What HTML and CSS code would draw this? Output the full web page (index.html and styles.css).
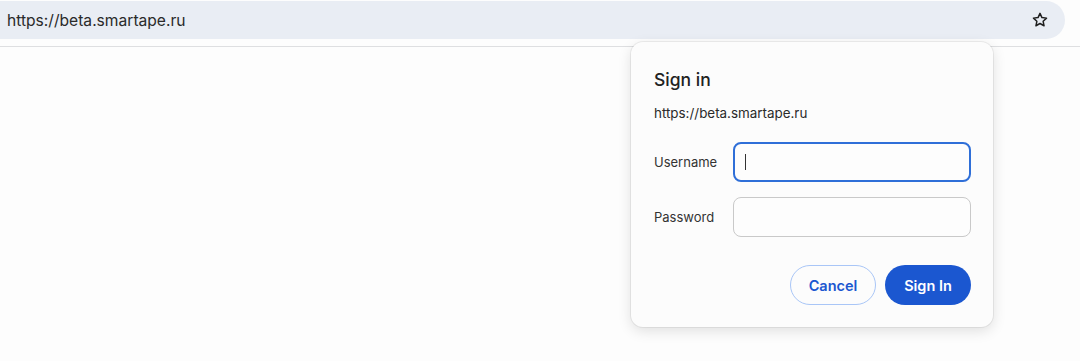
FILE: index.html
```html
<!DOCTYPE html>
<html lang="en">
<head>
  <meta charset="UTF-8" />
  <title>Sign in</title>
  <link rel="stylesheet" href="styles.css">
</head>
<body>
  <div class="toolbar">
    <div class="omnibox">
      <span class="omnibox-url">https://beta.smartape.ru</span>
      <svg class="star" width="18" height="18" viewBox="0 0 24 24">
        <path d="M12 3.2l2.6 5.6 6.1.7-4.5 4.2 1.2 6-5.4-3-5.4 3 1.2-6-4.5-4.2 6.1-.7z" fill="none" stroke="#1f1f1f" stroke-width="2" stroke-linejoin="round"/>
      </svg>
    </div>
  </div>

  <div class="page"></div>

  <!-- Boîte de connexion -->
  <div class="dialog">
    <div class="dialog-title">Sign in</div>
    <div class="dialog-origin">https://beta.smartape.ru</div>
    <div class="field">
      <label class="field-label">Username</label>
      <div class="field-input focused"><span class="caret"></span></div>
    </div>
    <div class="field">
      <label class="field-label">Password</label>
      <div class="field-input"></div>
    </div>
    <div class="actions">
      <button class="btn btn-cancel">Cancel</button>
      <button class="btn btn-primary">Sign In</button>
    </div>
  </div>
</body>
</html>
```

FILE: styles.css
```css
body {
  margin: 0;
  background: #fdfdfd;
  font-family: Inter, "Liberation Sans", sans-serif;
  color: #1f1f1f;
  height: 361px;
  overflow: hidden;
}

.toolbar {
  height: 47px;
  box-sizing: border-box;
  padding-top: 1px;
  border-bottom: 1px solid #dedfe1;
  background: #fdfdfd;
}

.omnibox {
  height: 38px;
  margin-left: -30px;
  width: 1095px;
  box-sizing: border-box;
  padding: 0 16px 0 37px;
  background: #e9edf4;
  border-radius: 19px;
  display: flex;
  align-items: center;
  justify-content: space-between;
}

.omnibox-url {
  font-size: 15.6px;
  color: #2a2a2a;
}

.star {
  display: block;
}

/* Boîte flottante */
.dialog {
  position: absolute;
  top: 42px;
  left: 631px;
  width: 362px;
  height: 285px;
  box-sizing: border-box;
  padding: 26px 22px 0 23px;
  background: #fcfcfc;
  border-radius: 12px;
  box-shadow: 0 0 0 1px rgba(0, 0, 0, 0.06), 0 4px 14px rgba(0, 0, 0, 0.12);
}

.dialog-title {
  font-size: 17.5px;
  font-weight: 500;
  color: #222;
  line-height: 24px;
}

.dialog-origin {
  margin-top: 13px;
  font-size: 13.4px;
  color: #2a2a2a;
  line-height: 16px;
}

.field {
  display: flex;
  align-items: center;
  margin-top: 15px;
}

.dialog-origin + .field {
  margin-top: 21px;
}

.field-label {
  width: 79px;
  font-size: 13px;
  color: #333;
}

.field-input {
  width: 239px;
  height: 40px;
  box-sizing: border-box;
  border: 1px solid #c9c9c9;
  border-radius: 8px;
  background: #fdfdfd;
  display: flex;
  align-items: center;
  padding-left: 11px;
}

.field-input.focused {
  border: 2px solid #2f6fd8;
  padding-left: 10px;
}

.caret {
  width: 1px;
  height: 16px;
  background: #333;
}

.actions {
  display: flex;
  justify-content: flex-end;
  gap: 9px;
  margin-top: 28px;
}

.btn {
  height: 40px;
  border-radius: 20px;
  font-family: Inter, "Liberation Sans", sans-serif;
  font-size: 14.5px;
  font-weight: 600;
  cursor: pointer;
}

.btn-cancel {
  width: 86px;
  background: #fcfcfc;
  border: 1px solid #a9c6f7;
  color: #1b57d0;
}

.btn-primary {
  width: 86px;
  background: #1b57d0;
  border: none;
  color: #fff;
}
```
